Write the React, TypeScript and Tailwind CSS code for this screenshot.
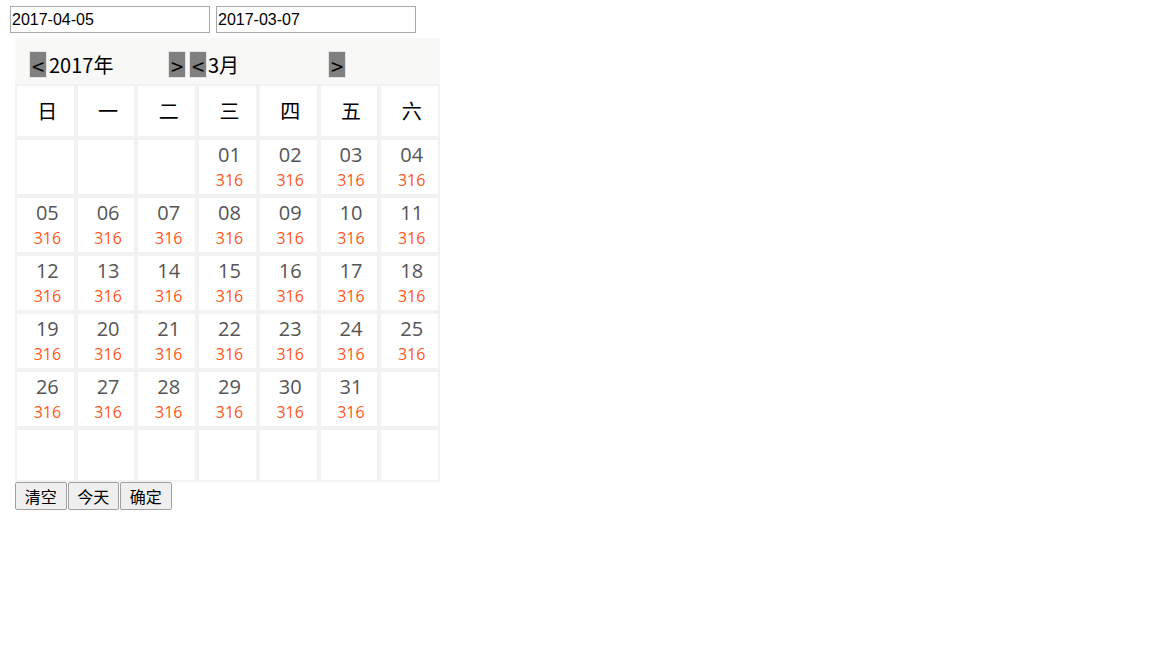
import React from "react";

const weekdays = ["日", "一", "二", "三", "四", "五", "六"];

function pad(n: number) {
  return n < 10 ? "0" + n : String(n);
}

export default function App() {
  const cells: (number | null)[] = [];
  for (let i = 0; i < 3; i++) cells.push(null);
  for (let d = 1; d <= 31; d++) cells.push(d);
  while (cells.length < 42) cells.push(null);
  const rows: (number | null)[][] = [];
  for (let r = 0; r < 6; r++) rows.push(cells.slice(r * 7, r * 7 + 7));

  const cjk = { fontFamily: '"Noto Sans CJK SC", "Noto Sans", sans-serif' };
  const open = { fontFamily: '"Open Sans", "Noto Sans", sans-serif' };

  return (
    <div className="min-h-[648px] w-[1152px] bg-white pl-[10px] pt-[6px]">
      <div className="flex gap-[6px]">
        <input
          readOnly
          value="2017-04-05"
          className="h-[27px] w-[200px] border border-[#a9a9a9] px-[1px] text-[16px] text-black outline-none"
          style={{ fontFamily: '"Liberation Sans", Arial, sans-serif' }}
        />
        <input
          readOnly
          value="2017-03-07"
          className="h-[27px] w-[200px] border border-[#a9a9a9] px-[1px] text-[16px] text-black outline-none"
          style={{ fontFamily: '"Liberation Sans", Arial, sans-serif' }}
        />
      </div>

      <div className="ml-[5px] mt-[5px] w-[425px]" style={cjk}>
        <div className="flex h-[46px] items-start bg-[#f8f8f6] pl-[14px] pt-[13px]">
          <button className="flex h-[27px] w-[18px] items-center justify-center border border-[#e4e4e4] bg-[#808080] text-[22px] leading-none text-black">
            &lt;
          </button>
          <span className="w-[121px] pl-[2px] text-[20px] leading-[27px] text-black">2017年</span>
          <button className="flex h-[27px] w-[18px] items-center justify-center border border-[#e4e4e4] bg-[#808080] text-[22px] leading-none text-black">
            &gt;
          </button>
          <button className="ml-[3px] flex h-[27px] w-[18px] items-center justify-center border border-[#e4e4e4] bg-[#808080] text-[22px] leading-none text-black">
            &lt;
          </button>
          <span className="w-[121px] pl-[1px] text-[20px] leading-[27px] text-black">3月</span>
          <button className="flex h-[27px] w-[18px] items-center justify-center border border-[#e4e4e4] bg-[#808080] text-[22px] leading-none text-black">
            &gt;
          </button>
        </div>

        <div className="grid grid-cols-7 gap-[4px] bg-[#f2f2f2] p-[2px]">
          {weekdays.map((w) => (
            <div
              key={w}
              className="flex h-[50px] items-center justify-center bg-white pl-[4px] text-[20px] text-black"
            >
              {w}
            </div>
          ))}
          {rows.map((row, ri) =>
            row.map((d, ci) => (
              <div
                key={ri + "-" + ci}
                className={
                  (ri === 5 ? "h-[50px] " : "h-[54px] ") +
                  "flex flex-col items-center bg-white pl-[4px] pt-[2px]"
                }
                style={open}
              >
                {d !== null && (
                  <>
                    <span className="text-[20px] leading-[26px] text-[#555555]">{pad(d)}</span>
                    <span className="text-[16px] leading-[24px] text-[#ff5722]">316</span>
                  </>
                )}
              </div>
            ))
          )}
        </div>

        <div className="flex gap-[1px]">
          {["清空", "今天", "确定"].map((t) => (
            <button
              key={t}
              className="h-[28px] w-[51.5px] rounded-[2px] border border-[#a0a0a0] bg-[#efefef] text-[16px] leading-none text-black"
              style={cjk}
            >
              {t}
            </button>
          ))}
        </div>
      </div>
    </div>
  );
}
